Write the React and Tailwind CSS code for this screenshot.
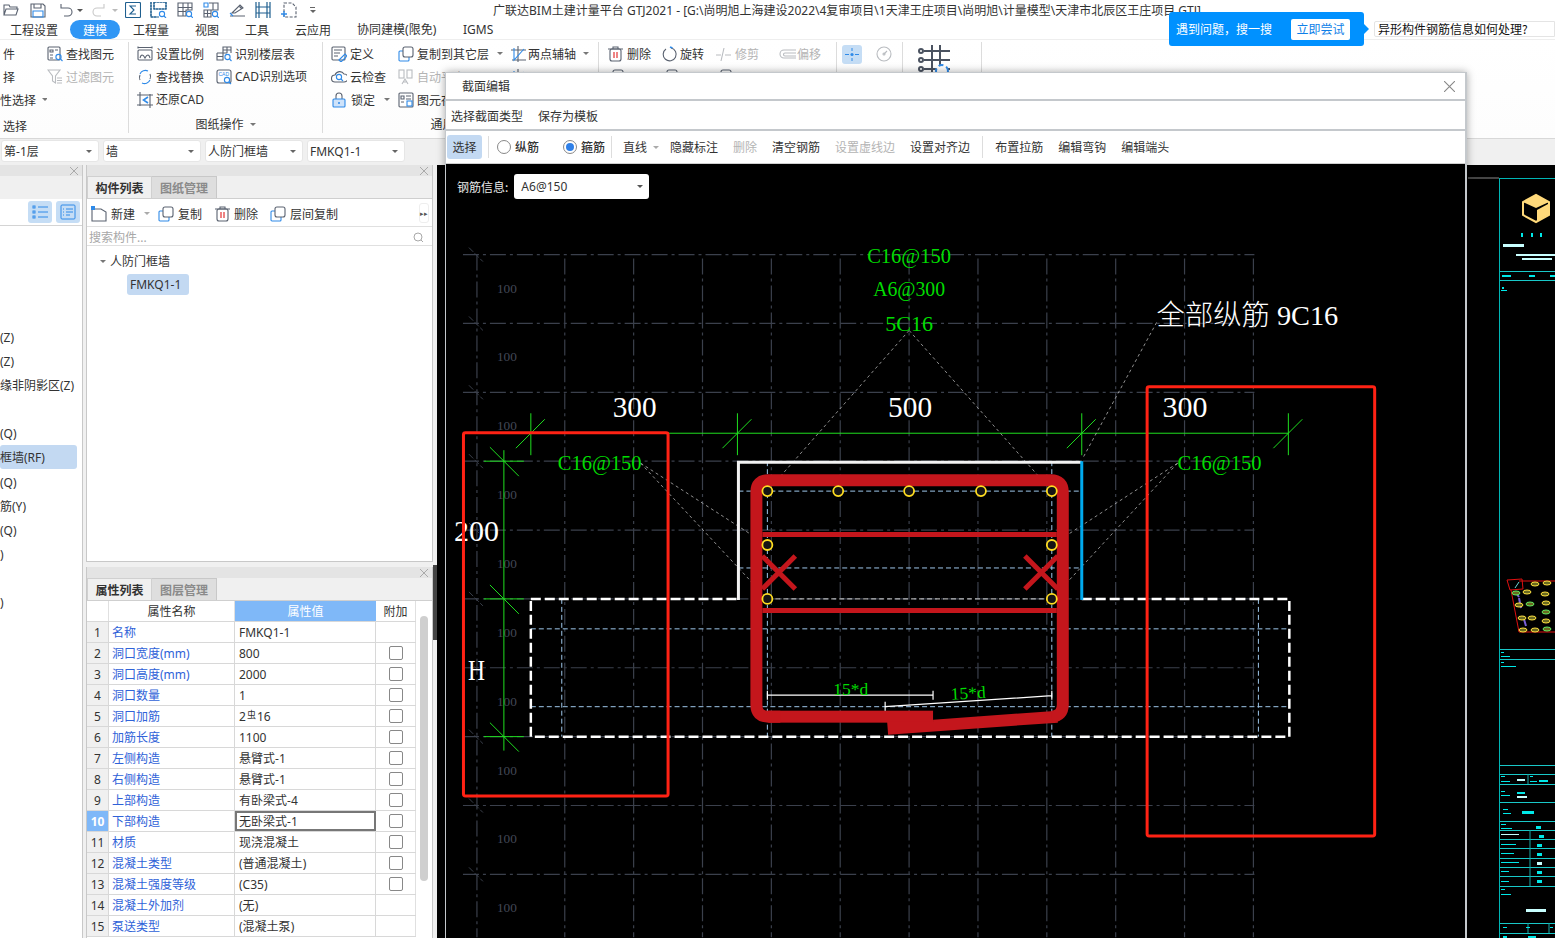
import React from "react";

const B = "#2f8ae8";
const G = "#5a6270";
const L = "#b9bcc0";

const Mix = ({ t }) => (
  <span>
    {String(t).split(/([\x20-\x7e]+)/).map((p, i) =>
      i % 2 ? <span key={i} className="font-['Noto_Sans']">{p}</span> : p
    )}
  </span>
);

const Ic = ({ children, w = 16, h = 16, c = G }) => (
  <svg width={w} height={h} viewBox={`0 0 ${w} ${h}`} fill="none" stroke={c} strokeWidth="1.1" className="shrink-0">
    {children}
  </svg>
);
const Mag = ({ x = 11, y = 11, c = B }) => (
  <g stroke={c}>
    <circle cx={x} cy={y} r="2.6" />
    <path d={`M${x + 2} ${y + 2}l2 2`} />
  </g>
);
const Caret = ({ c = "border-t-[#777]" }) => (
  <span className={`inline-block w-0 h-0 border-x-[3px] border-t-[3px] border-x-transparent ${c}`} />
);

const icons = {
  find: <Ic><rect x="1" y="1" width="12" height="13" rx="1" /><path d="M3 4h3v2H3zM8 4h3M3 9h3M3 12h3" /><Mag x={11.5} y={11} /></Ic>,
  filter: <Ic c={L}><path d="M1 1h12L8.5 7v7L5.5 12V7zM10 9h5M10 11.5h5M10 14h5" /></Ic>,
  scale: <Ic><rect x="1" y="4" width="14" height="10" rx="1" /><path d="M1 1.5h14M1 .5v2M15 .5v2M3 12c1-4 3-4 5 0 2-4 4-4 5 0" /></Ic>,
  floor: <Ic><path d="M1 7h6V1h8v6M1 7v7h6V7M7 7h4M1 10.5h6M11 1v6M7 4h8" /><Mag x={11.5} y={11} /></Ic>,
  replace: <Ic c={B}><path d="M3 5a6 6 0 0 1 8-3M13 11a6 6 0 0 1-8 3" /><path stroke={G} d="M13 5a6 6 0 0 1 0 5M3 11a6 6 0 0 1 0-5" /></Ic>,
  cad: <Ic><rect x="1" y="1" width="14" height="13" rx="2" /><text x="2.5" y="7" fontSize="5" fill={B} stroke="none" fontFamily="Liberation Sans">CAD</text><Mag x={11} y={11} /></Ic>,
  restore: <Ic><path d="M0 3h16M3 0v14M13 2v14M0 13h16" /><path stroke={B} strokeWidth="1.6" d="M11 5L6.5 8l4.5 3" /></Ic>,
  define: <Ic><rect x="1" y="1" width="13" height="13" rx="1" /><path d="M3 4h8M3 7h6M3 10h4" /><path stroke={B} d="M8 14l6-6 2 2-6 6z" /></Ic>,
  cloud: <Ic><path d="M4 13a3.5 3.5 0 0 1 0-7 5 5 0 0 1 9-1 4 4 0 0 1 0 8z" /><Mag x={8} y={8} /></Ic>,
  lock: <Ic><path d="M5 7V4a3 3 0 0 1 6 0v3" /><rect x="2" y="7" width="12" height="8" rx="1" stroke={B} fill="#cfe3fa" /><circle cx="8" cy="11" r="1" fill={B} stroke="none" /></Ic>,
  copy: <Ic><rect x="1" y="5" width="10" height="10" rx="1" stroke={B} /><rect x="5" y="1" width="10" height="10" rx="2" fill="#fff" /></Ic>,
  auto: <Ic c={L}><rect x="1" y="1" width="5" height="8" /><rect x="9" y="1" width="5" height="8" /><path d="M4 15l3-5 3 5M5 13h4" /></Ic>,
  unit: <Ic><rect x="1" y="1" width="14" height="14" rx="1" /><path d="M3 4h3v3H3zM8 4h5M3 10h3M8 7h5" /><rect x="9" y="9" width="5" height="5" stroke={B} /></Ic>,
  axis: <Ic><path d="M1 4h15M2 14h14M8 0v16" /><path stroke={B} d="M4 2v12L14 3" /></Ic>,
  trash: <Ic><rect x="2" y="3" width="11" height="12" rx="2" /><path d="M0 3h15M5 3V1h5v2" /><path stroke="#e02020" d="M6 6v6M9 6v6" /></Ic>,
  rotate: <Ic><path d="M9 2a6.5 6.5 0 1 1-5 1" /><path stroke={B} strokeWidth="1.8" d="M8 1l2.5 1" /></Ic>,
  trim: <Ic c={L}><path d="M0 9h5M9 9h6M8 2L5 15" /></Ic>,
  offset: <Ic w={18} c={L}><path d="M18 4H6a4 4 0 0 0 0 8h12M18 7H7a1 1 0 0 0 0 3h11" /></Ic>,
  axisPt: <Ic w={20} h={19} c="#2f8ae8"><path d="M3 9.500h4M13 9.500h4M10 3v3M10 13v3" strokeWidth="1" /><circle cx="10" cy="9.500" r="1.600" fill={B} stroke="none" /></Ic>,
  gauge: <Ic c={L}><circle cx="8" cy="8" r="7" /><path d="M8 8l3-3" /><circle cx="8" cy="8" r="1" /></Ic>,
};

const Item = ({ icon, label, grey, caret, w, gap = "gap-[3px]" }) => (
  <div className={`flex items-center h-[23px] ${gap} whitespace-nowrap ${grey ? "text-[#b4b4b4]" : ""}`} style={w ? { width: w } : undefined}>
    {icon}
    {label && <Mix t={label} />}
    {caret && <span className="ml-[5px] flex"><Caret /></span>}
  </div>
);

const Group = ({ w, label, children, align = "justify-center", pl = "pl-0", last, lp = "mt-[3px]" }) => (
  <div className={`h-[91px] mt-[2px] flex flex-col shrink-0 ${last ? "" : "border-r border-[#dcdcdc]"}`} style={{ width: w }}>
    <div className={`h-[69px] shrink-0 flex ${pl} overflow-hidden`}>{children}</div>
    {label && (
      <div className={`flex items-center shrink-0 ${align} gap-[6px] h-[20px] ${lp}`}>
        <span>{label.t}</span>
        {label.caret && <Caret />}
      </div>
    )}
  </div>
);

const Ribbon = () => (
  <div className="h-[99px] bg-white flex border-b border-[#d8d8d8] bg-gradient-to-b from-white to-[#fdfdfd]">
    <Group w={129} label={{ t: "选择" }} align="justify-start pl-[3px]" lp="mt-[5px]">
      <div className="w-[47px] overflow-hidden flex flex-col items-end">
        <div className="h-[23px] flex items-center justify-end w-[47px] pr-[32px] overflow-visible">件</div>
        <div className="h-[23px] flex items-center justify-end w-[47px] pr-[32px]">择</div>
        <div className="h-[23px] flex items-center w-[47px] whitespace-nowrap -ml-[15px]">性选择<span className="ml-[6px] flex"><Caret /></span></div>
      </div>
      <div>
        <Item icon={icons.find} label="查找图元" />
        <Item icon={icons.filter} label="过滤图元" grey />
      </div>
    </Group>
    <Group w={194} pl="pl-[8px]" label={{ t: "图纸操作", caret: true }}>
      <div className="w-[79px]">
        <Item icon={icons.scale} label="设置比例" />
        <Item icon={icons.replace} label="查找替换" />
        <Item icon={icons.restore} label="还原CAD" />
      </div>
      <div>
        <Item icon={icons.floor} label="识别楼层表" />
        <Item icon={icons.cad} label="CAD识别选项" />
      </div>
    </Group>
    <Group w={276} pl="pl-[8px]" label={{ t: "通用操作", caret: true }}>
      <div className="w-[67px]">
        <Item icon={icons.define} label="定义" />
        <Item icon={icons.cloud} label="云检查" />
        <Item icon={icons.lock} label="锁定" caret gap="gap-[4px]" />
      </div>
      <div className="w-[112px]">
        <Item icon={icons.copy} label="复制到其它层" caret />
        <Item icon={icons.auto} label="自动平齐" grey />
        <Item icon={icons.unit} label="图元存盘" />
      </div>
      <div>
        <Item icon={icons.axis} label="两点辅轴" caret gap="gap-[2px]" />
        <Item icon={icons.axis} />
      </div>
    </Group>
    <Group w={238} pl="pl-[9px]">
      <div>
        <div className="flex">
          <Item icon={icons.trash} label="删除" w={54} />
          <Item icon={icons.rotate} label="旋转" w={54} gap="gap-[2px]" />
          <Item icon={icons.trim} label="修剪" grey w={62} />
          <Item icon={icons.offset} label="偏移" grey gap="gap-[1px]" />
        </div>
        <div className="flex">
          <Item icon={icons.copy} w={54} />
          <Item icon={icons.copy} w={54} />
          <Item icon={icons.copy} w={62} />
        </div>
      </div>
    </Group>
    <Group w={66} pl="pl-[5px]">
      <div className="flex items-start gap-[14px]">
        <div className="w-[20px] h-[19px] mt-[3px] bg-[#c5ddf5] rounded-[3px] flex">{icons.axisPt}</div>
        <div className="mt-[4px]">{icons.gauge}</div>
      </div>
    </Group>
    <Group w={79} pl="pl-[15px]">
      <svg width="32" height="30" viewBox="0 0 32 30" fill="none" stroke="#4a5260" strokeWidth="2" className="mt-[3px]">
        <path d="M6 6h26M6 15h26M6 24h26M14 0v30M22 0v30" />
        <circle cx="3" cy="6" r="2" fill="#fff" />
        <circle cx="3" cy="15" r="2" fill="#fff" />
        <circle cx="3" cy="24" r="2" fill="#fff" />
        <circle cx="24" cy="26" r="6" fill="#fff" stroke="#2f8ae8" strokeDasharray="5 3" />
      </svg>
    </Group>
  </div>
);

const QuickIcons = () => (
  <div className="w-[493px] shrink-0 flex items-center pl-[3px] h-full">
    <div className="w-[27px]"><Ic><path d="M1 13V3h5l1 2h7v2M1 13l2-6h12l-2 6z" /></Ic></div>
    <div className="w-[27px]"><Ic><path d="M1 2h12l2 2v11H1zM4 2v4h7V2" /><path stroke={B} d="M3 9h10v6H3z" /></Ic></div>
    <div className="w-[20px]"><Ic><path d="M4 6h7a4 4 0 0 1 0 8H7M4 2v4h4" /></Ic></div>
    <div className="w-[15px] flex"><Caret c="border-t-[#555]" /></div>
    <div className="w-[20px]"><Ic c="#c8c8c8"><path d="M12 6H5a4 4 0 0 0 0 8h4M12 2v4H8" /></Ic></div>
    <div className="w-[13px] flex"><Caret c="border-t-[#bbb]" /></div>
    <div className="w-[25px]"><Ic c="#1f5f8f"><rect x=".5" y=".5" width="15" height="15" rx="1" /><path d="M11 4H5l4 4-4 4h6" /></Ic></div>
    <div className="w-[27px]"><Ic w={17} c="#1f5f8f"><path d="M1 0v15h8M4 0h12v7H4z" strokeDasharray="2 1" /><path d="M4 0h12v7H4zM1 0v15h6" /><Mag x={12} y={12} /></Ic></div>
    <div className="w-[26px]"><Ic><path d="M1 1h14v7H9v6H1zM1 5.500h14M6 1v13M11 1v7M1 9.500h8" /><Mag x={12} y={12} /></Ic></div>
    <div className="w-[26px]"><Ic><path d="M6 1h9v7H8M1 8h7v7H1zM10 1v7M1 11.500h7M4.500 8v7" /><path stroke={B} d="M1 1h4v4H1z" /><Mag x={12} y={12} /></Ic></div>
    <div className="w-[26px]"><Ic w={17}><path d="M1 14h15M3 11l8-8 3 3-8 5zM10 4l3 3" /><path stroke={B} d="M1 11l3 3" /></Ic></div>
    <div className="w-[26px]"><Ic c="#1f5f8f"><path d="M1 0v16M15 0v16M1 5h14M1 11h14M4 0v16M12 0v16" strokeWidth="1.200" /></Ic></div>
    <div className="w-[29px]"><Ic><path d="M3 1h8l4 4v10H3z" strokeDasharray="3 1.500" /><path stroke={B} d="M0 12h6M3 9v6" strokeWidth="1.400" /></Ic></div>
    <div className="flex flex-col gap-[2px]"><span className="w-[5px] h-px bg-[#666]" /><Caret c="border-t-[#666]" /></div>
  </div>
);

const Tab = ({ t, active, x }) => (
  <div className={`h-[19px] flex items-center justify-center ${active ? "bg-[#2f96f5] text-white rounded-full" : ""}`} style={{ width: x }}>{t}</div>
);

const Sel = ({ t }) => (
  <div className="w-[98px] h-[22px] bg-white rounded-[3px] flex items-center justify-between pl-[2px] pr-[6px] border border-[#e6e6e6]">
    <Mix t={t} />
    <Caret c="border-t-[#666]" />
  </div>
);

const Close = () => (
  <svg width="8" height="8" viewBox="0 0 8 8" stroke="#aaa" strokeWidth="1"><path d="M0 0l8 8M8 0L0 8" /></svg>
);
const PanelHead = () => (
  <div className="h-[11px] bg-[#e4e4e4] flex items-center justify-end pr-[4px] shrink-0"><Close /></div>
);
const Tabs = ({ a, b }) => (
  <div className="h-[23px] bg-[#f0f0f0] border-b border-[#cfcfcf] flex shrink-0 font-bold">
    <div className="w-[65px] flex items-center justify-center border border-b-0 border-[#d0d0d0]">{a}</div>
    <div className="w-[65px] flex items-center justify-center bg-[#dedede] text-[#8a8a8a] border border-l-0 border-b-0 border-[#c8c8c8]">{b}</div>
  </div>
);

const leftRows = ["", "", "", "", "(Z)", "(Z)", "缘非阴影区(Z)", "", "(Q)", "框墙(RF)", "(Q)", "筋(Y)", "(Q)", ")", "", ")"];

const LeftPanel = () => (
  <div className="w-[83px] shrink-0 border-r border-[#c8c8c8] bg-white flex flex-col">
    <PanelHead />
    <div className="h-[23px] bg-[#f0f0f0] shrink-0" />
    <div className="h-[27px] border-b border-[#d4d4d4] flex items-start justify-end gap-[4px] pr-[2px] shrink-0 bg-white">
      <div className="w-[24px] h-[22px] mt-[2px] bg-[#c5ddf5] rounded-[3px] flex items-center justify-center">
        <svg width="16" height="14" viewBox="0 0 16 14" fill="none" stroke="#2f8ae8" strokeWidth="1"><path d="M6 2h10M6 7h10M6 12h10" /><rect x="1" y="1" width="2" height="2" /><rect x="1" y="6" width="2" height="2" /><rect x="1" y="11" width="2" height="2" /></svg>
      </div>
      <div className="w-[24px] h-[22px] mt-[2px] bg-[#c5ddf5] rounded-[3px] flex items-center justify-center">
        <svg width="16" height="16" viewBox="0 0 16 16" fill="none" stroke="#2f8ae8" strokeWidth="1"><rect x="1" y="1" width="14" height="14" rx="1" /><path d="M3 5h1M6 5h7M3 8h1M6 8h7M3 11h1M6 11h4" /></svg>
      </div>
    </div>
    <div className="pt-[3px] flex flex-col overflow-hidden">
      {leftRows.map((t, i) => (
        <div key={i} className={`h-[24px] flex items-center whitespace-nowrap shrink-0 ${t === "框墙(RF)" ? "bg-[#c3d9f2] rounded-[3px] w-[77px] h-[23px] mb-px" : ""}`}>{t && <Mix t={t} />}</div>
      ))}
    </div>
  </div>
);

const MidToolbar = () => (
  <div className="h-[28px] border-b border-[#e0e0e0] flex items-center pl-[4px] pt-[2px] relative shrink-0">
    <div className="w-[67px] flex items-center">
      <Ic><path d="M1 3h9l5 3v9H1z" /><rect x="0" y="0" width="4" height="4" fill={B} stroke="none" /></Ic>
      <span className="ml-[4px]">新建</span>
      <span className="ml-[9px] flex"><Caret c="border-t-[#aaa]" /></span>
    </div>
    <div className="w-[57px] flex items-center gap-[4px]">{icons.copy}<span>复制</span></div>
    <div className="w-[55px] flex items-center gap-[3px]">{icons.trash}<span>删除</span></div>
    <div className="flex items-center gap-[4px]">{icons.copy}<span>层间复制</span></div>
    <span className="absolute right-[3px] top-[4px] w-[10px] h-[20px] border border-[#eee] rounded-[3px] text-[7px] leading-[18px] text-center text-[#555]">▸▸</span>
  </div>
);

const MidPanel = () => (
  <div className="h-[397px] border-x border-b border-[#c8c8c8] bg-white flex flex-col">
    <PanelHead />
    <Tabs a="构件列表" b="图纸管理" />
    <MidToolbar />
    <div className="h-[19px] border-b border-[#e0e0e0] flex items-center justify-between pl-[2px] pr-[8px] pt-[3px] text-[#a8a8a8] shrink-0">
      <Mix t="搜索构件..." />
      <svg width="11" height="11" viewBox="0 0 11 11" fill="none" stroke="#a8a8a8"><circle cx="5" cy="5" r="4" /><path d="M8 8l2 2" /></svg>
    </div>
    <div className="pl-[13px] pt-[4px]">
      <div className="h-[22px] flex items-center gap-[4px]"><Caret /><span>人防门框墙</span></div>
      <div className="ml-[27px] mt-[2px] w-[62px] h-[21px] bg-[#c3d9f2] rounded-[3px] flex items-center pl-[3px]"><Mix t="FMKQ1-1" /></div>
    </div>
  </div>
);

const rows = [
  ["名称", "FMKQ1-1", false],
  ["洞口宽度(mm)", "800", true],
  ["洞口高度(mm)", "2000", true],
  ["洞口数量", "1", true],
  ["洞口加筋", "rebar", true],
  ["加筋长度", "1100", true],
  ["左侧构造", "悬臂式-1", true],
  ["右侧构造", "悬臂式-1", true],
  ["上部构造", "有卧梁式-4", true],
  ["下部构造", "无卧梁式-1", true],
  ["材质", "现浇混凝土", true],
  ["混凝土类型", "(普通混凝土)", true],
  ["混凝土强度等级", "(C35)", true],
  ["混凝土外加剂", "(无)", false],
  ["泵送类型", "(混凝土泵)", false],
];

const PropPanel = () => (
  <div className="flex-1 border-x border-[#c8c8c8] bg-white flex flex-col min-h-0 overflow-hidden">
    <PanelHead />
    <Tabs a="属性列表" b="图层管理" />
    <div className="flex flex-1 min-h-0">
      <div className="w-[329px] shrink-0 flex flex-col">
        <div className="grid grid-cols-[22px_126px_141px_40px] h-[21px] shrink-0 border-b border-[#d8d8d8]">
          <div className="border-r border-[#e0e0e0]" />
          <div className="border-r border-[#e0e0e0] flex items-center justify-center">属性名称</div>
          <div className="bg-[#7fb8f8] text-white flex items-center justify-center">属性值</div>
          <div className="border-r border-[#e0e0e0] flex items-center justify-center">附加</div>
        </div>
        {rows.map((r, i) => (
          <div key={i} className="grid grid-cols-[22px_126px_141px_40px] h-[21px] shrink-0 border-b border-[#d8d8d8]">
            <div className={`flex items-center justify-center border-r border-[#d8d8d8] ${i === 9 ? "bg-[#7fb8f8] text-white font-bold" : "bg-[#f0f0f0]"}`}><Mix t={String(i + 1)} /></div>
            <div className="border-r border-[#d8d8d8] flex items-center pl-[3px] text-[#2f62d8] whitespace-nowrap"><Mix t={r[0]} /></div>
            <div className={`flex items-center whitespace-nowrap ${i === 9 ? "border-2 border-[#777] pl-[2px]" : "border-r border-[#d8d8d8] pl-[4px]"}`}>
              {r[1] === "rebar" ? (
                <span><span className="font-['Noto_Sans']">2</span><span className="text-[9px] align-[3px] mx-px">虫</span><span className="font-['Noto_Sans']">16</span></span>
              ) : <Mix t={r[1]} />}
            </div>
            <div className="border-r border-[#e0e0e0] flex items-center justify-center">
              {r[2] && <span className="w-[14px] h-[14px] border border-[#888] rounded-[2px]" />}
            </div>
          </div>
        ))}
      </div>
      <div className="flex-1 pt-[15px] flex justify-center">
        <div className="w-[8px] h-[265px] bg-[#cfcfcf] rounded-full" />
      </div>
    </div>
  </div>
);

const hLines = [254, 323, 392, 461, 530, 599, 668, 737, 806, 875];
const vLines = [476, 564, 633, 702, 771, 840, 909, 978, 1047, 1116, 1185, 1254];
const hund = [288, 357, 426, 495, 564, 633, 702, 771, 840, 909];
const rebars = [[767, 491], [838, 491], [909, 491], [981, 491], [1052, 491], [767, 545], [1052, 545], [767, 599], [1052, 599]];
const SERIF = "'Liberation Serif','Noto Sans CJK SC',serif";

const Tick = ({ x, y, v }) => (
  <g stroke="#1fe01f" strokeWidth="1">
    {v ? <path d={`M${x} ${y - 20}v42`} /> : <path d={`M${x - 20} ${y}h40`} />}
    {v ? <path d={`M${x - 15} ${y + 15}l29-29`} /> : <path d={`M${x - 14} ${y - 14}l29 29`} />}
  </g>
);
const Gt = ({ x, y, w, t, s = 22 }) => (
  <text x={x} y={y} fill="#00dd00" fontFamily={SERIF} fontSize={s} textLength={w} lengthAdjust="spacingAndGlyphs">{t}</text>
);
const Wt = ({ x, y, w, t, s = 30 }) => (
  <text x={x} y={y} fill="#fff" fontFamily={SERIF} fontSize={s} textLength={w} lengthAdjust="spacingAndGlyphs">{t}</text>
);

const Section = () => (
  <svg viewBox="445 164 1021 774" className="absolute inset-0 w-full h-full">
    <g stroke="#3b404c" strokeWidth="1.200" strokeDasharray="16 4 3 4" fill="none">
      {hLines.map((y) => <path key={y} d={`M462 ${y}H1255`} />)}
      {vLines.map((x) => <path key={x} d={`M${x} ${x === 476 ? 254 : 258}V938`} />)}
    </g>
    <g stroke="#3b404c" strokeWidth="1" strokeDasharray="6 2">
      {hLines.map((y) => <path key={y} d={`M468 ${y - 7}l14 14`} />)}
    </g>
    {hund.map((y) => (
      <text key={y} x="496" y={y + 4} fill="#434857" fontFamily={SERIF} fontSize="13" textLength="20" lengthAdjust="spacingAndGlyphs">100</text>
    ))}

    <g stroke="#9fc8ec" strokeWidth="1" strokeDasharray="5 3" fill="none">
      <path d="M738 491H1082M738 568H1082M530 629H1290M530 707H1290M561 599V737M1259 599V737M767 461V737M1052 461V737" />
    </g>
    <path d="M767 599H1052" stroke="#d8d8d8" strokeWidth="1" strokeDasharray="5 3" />

    <path d="M530 433H1289M503 450V751" stroke="#1fe01f" strokeWidth="1" fill="none" />
    <Tick x={530} y={433} v /><Tick x={737} y={433} v /><Tick x={1082} y={433} v /><Tick x={1289} y={433} v />
    <Tick x={503} y={461} /><Tick x={503} y={599} /><Tick x={503} y={737} />

    <g stroke="#b4b4b4" strokeWidth="0.800" strokeDasharray="3 3" fill="none">
      <path d="M909 330L767 491M909 330L1052 491M1157 322L1083 458M640 463L767 545M640 463L767 599M1178 463L1052 545M1178 463L1052 599" />
    </g>

    <path d="M530 599H738M1082 599H1290V737H530V599" stroke="#fff" strokeWidth="2.500" strokeDasharray="10 4" fill="none" />
    <path d="M738 600V462H1082" stroke="#f2f2f2" strokeWidth="3" fill="none" />
    <path d="M1082 461V600" stroke="#00aaee" strokeWidth="3" fill="none" />

    <g fill="#c4161c" stroke="none">
      <rect x="768" y="711" width="165" height="12" />
      <polygon points="887,722 888,735 1058,723 1058,711 933,720 933,722" />
    </g>
    <path d="M780 717H768Q756 717 756 705V492Q756 480 768 480H1051Q1063 480 1063 492V705Q1063 716 1052 717" stroke="#c4161c" strokeWidth="12" fill="none" />
    <path d="M762 534.500H1057M762 610.500H1057M762 556L795 589M795 556L762 589M1025 556L1058 589M1058 556L1025 589" stroke="#c4161c" strokeWidth="5" fill="none" />

    {rebars.map(([x, y]) => (
      <circle key={x + "-" + y} cx={x} cy={y} r="5" fill="#151515" stroke="#ffdd22" strokeWidth="1.800" />
    ))}

    <path d="M767 695.500H933M767 691v9M933 691v9M885 707L1052 696M885 702v9M1052 691v9" stroke="#fff" strokeWidth="1.200" fill="none" />

    <Gt x={867} y={262} w={84} t="C16@150" />
    <Gt x={873} y={296} w={72} t="A6@300" />
    <Gt x={885} y={331} w={48} t="5C16" />
    <Gt x={557} y={470} w={84} t="C16@150" />
    <Gt x={1178} y={470} w={84} t="C16@150" />
    <Gt x={833} y={695} w={35} t="15*d" s={17} />
    <g transform="rotate(-3 951 700)"><Gt x={951} y={700} w={35} t="15*d" s={17} /></g>

    <Wt x={612} y={417} w={44} t="300" />
    <Wt x={888} y={417} w={44} t="500" />
    <Wt x={1163} y={417} w={45} t="300" />
    <Wt x={453} y={541} w={45} t="200" />
    <Wt x={467} y={680} w={17} t="H" />
    <text x="1157" y="325" fill="#fff" fontFamily={SERIF} fontSize="28" fontWeight="300" textLength="182" lengthAdjust="spacingAndGlyphs">全部纵筋 9C16</text>

    <rect x="462.500" y="432.500" width="205" height="364" rx="2" fill="none" stroke="#ff2214" strokeWidth="3" />
    <rect x="1147.500" y="386.500" width="228" height="450" rx="2" fill="none" stroke="#ff2214" strokeWidth="3" />
  </svg>
);

const Radio = ({ on, t }) => (
  <div className="flex items-center gap-[4px]">
    <span className="w-[14px] h-[14px] rounded-full border border-[#888] flex items-center justify-center">
      {on && <span className="w-[8px] h-[8px] rounded-full bg-[#2f80e8]" />}
    </span>
    <span className="font-medium">{t}</span>
  </div>
);

const Dialog = () => (
  <div className="absolute left-[445px] top-[72px] w-[1022px] h-[866px] bg-white border-l border-r-2 border-[#c4c8cc] shadow-[0_0_8px_rgba(0,0,0,0.35)] flex flex-col">
    <div className="h-[29px] border-t border-b-2 border-[#c4c8cc] flex items-center justify-between pl-[16px] pr-[10px] shrink-0">
      <span>截面编辑</span>
      <svg width="11" height="11" viewBox="0 0 11 11" stroke="#888" strokeWidth="1.100"><path d="M0 0l11 11M11 0L0 11" /></svg>
    </div>
    <div className="h-[30px] flex items-center gap-[15px] pl-[5px] pt-[2px] border-b-2 border-[#c4c8cc] shrink-0">
      <span>选择截面类型</span>
      <span>保存为模板</span>
    </div>
    <div className="h-[33px] flex items-center pl-[1px] border-b border-[#cfcfcf] shrink-0 whitespace-nowrap">
      <div className="w-[35px] h-[24px] bg-[#c3d9f2] rounded-[3px] flex items-center justify-center">选择</div>
      <span className="w-px h-[22px] bg-[#ddd] ml-[6px]" />
      <div className="ml-[8px]"><Radio t="纵筋" /></div>
      <div className="ml-[24px]"><Radio on t="箍筋" /></div>
      <span className="w-px h-[22px] bg-[#ddd] ml-[6px]" />
      <div className="ml-[11px] flex items-center gap-[6px]"><span>直线</span><Caret c="border-t-[#aaa]" /></div>
      <div className="ml-[11px] flex items-center gap-[15px]">
        <span>隐藏标注</span>
        <span className="text-[#b4b4b4]">删除</span>
        <span>清空钢筋</span>
        <span className="text-[#b4b4b4]">设置虚线边</span>
        <span>设置对齐边</span>
      </div>
      <span className="w-px h-[22px] bg-[#ddd] ml-[12px]" />
      <div className="ml-[12px] flex items-center gap-[15px]">
        <span>布置拉筋</span>
        <span>编辑弯钩</span>
        <span>编辑端头</span>
      </div>
    </div>
    <div className="flex-1 bg-black relative overflow-hidden">
      <Section />
      <div className="absolute left-[11px] top-[10px] flex items-center gap-[6px]">
        <span className="text-[#e8e8e8]">钢筋信息:</span>
        <div className="w-[135px] h-[25px] bg-white rounded-[3px] flex items-center justify-between pl-[7px] pr-[6px]">
          <Mix t="A6@150" />
          <Caret c="border-t-[#555]" />
        </div>
      </div>
    </div>
  </div>
);

const cadH = [271, 280, 649, 659, 765, 774, 784, 802, 821, 830, 839, 848, 858, 867, 876, 886, 923, 933];
const cadBits = [
  [1503, 244, 21, 3], [1516, 254, 39, 2], [1522, 258, 30, 2], [1502, 275, 9, 2], [1529, 275, 6, 2], [1550, 275, 5, 2], [1502, 287, 2, 2], [1501, 290, 6, 1],
  [1501, 652, 3, 1], [1501, 656, 9, 1], [1501, 662, 3, 1], [1501, 666, 15, 1],
  [1501, 776, 4, 1], [1501, 781, 9, 1], [1517, 779, 8, 2], [1530, 776, 3, 1], [1530, 781, 7, 1], [1539, 780, 9, 2],
  [1501, 791, 4, 1], [1501, 795, 9, 1], [1517, 792, 8, 2], [1517, 796, 10, 2],
  [1503, 809, 5, 1], [1503, 813, 8, 1], [1522, 811, 12, 3],
  [1501, 824, 5, 1], [1501, 828, 11, 1], [1536, 826, 5, 3],
  [1501, 834, 18, 1], [1539, 835, 5, 3], [1501, 844, 15, 1], [1537, 844, 5, 3], [1501, 853, 13, 1], [1537, 853, 5, 3],
  [1501, 862, 18, 1], [1537, 862, 5, 3], [1501, 871, 8, 1], [1537, 871, 5, 3], [1501, 881, 8, 1], [1537, 880, 5, 3],
  [1501, 889, 4, 1], [1501, 894, 10, 1], [1526, 909, 20, 3],
  [1503, 927, 4, 1], [1503, 936, 4, 2], [1526, 927, 4, 1], [1550, 927, 3, 1], [1528, 936, 8, 2],
];
const blobs = [[1535, 584], [1547, 583], [1516, 593], [1527, 592], [1545, 594], [1519, 605], [1530, 604], [1546, 603], [1522, 618], [1532, 618], [1546, 612], [1546, 621], [1523, 630], [1535, 630], [1547, 629]];

const CadRight = () => (
  <svg viewBox="1467 165 88 773" className="w-[88px] h-full shrink-0 bg-black">
    <path d="M1468 178H1499" stroke="#8a8a8a" strokeWidth="1" />
    <path d="M1499.500 178.500H1555M1499.500 178V938" stroke="#00b4b4" strokeWidth="1" fill="none" />
    {cadH.map((y) => <path key={y} d={`M1500 ${y}.5H1555`} stroke="#19c8c8" strokeWidth="1" />)}
    <path d="M1530 830V886M1528 923v10M1549 923v10M1528 774v10" stroke="#19a8a8" strokeWidth="1" />
    <g fill="#00e8e8">
      {cadBits.map(([x, y, w, h], i) => <rect key={i} x={x} y={y} width={w} height={h} fill={i < 3 || i > 11 && i % 7 === 0 ? "#c8ffff" : "#00e8e8"} />)}
      <rect x="1521" y="233" width="2" height="4" /><rect x="1531" y="233" width="2" height="4" /><rect x="1540" y="233" width="2" height="4" />
    </g>
    <path d="M1536 195L1549 202V215L1536 222L1523 215V202Z" fill="none" stroke="#ffd97a" strokeWidth="2" />
    <path d="M1536 195L1549 202L1536 208L1523 202Z" fill="#ffd97a" />
    <path d="M1537 210L1548 204V215L1537 221Z" fill="#ffd97a" />
    <path d="M1507 580L1522 579L1523 589L1510 590ZM1519 581H1555M1511 590L1519 632H1555" stroke="#e01010" strokeWidth="1" fill="none" />
    <path d="M1516 593l3 4M1519 598l2 10M1523 616l3 10" stroke="#7a60d8" strokeWidth="2" />
    {blobs.map(([x, y], i) => (
      <ellipse key={i} cx={x} cy={y} rx="4" ry="2" fill="#6a6a20" stroke={i % 4 === 2 ? "#60e860" : "#ffe040"} strokeWidth="1" />
    ))}
    <path d="M1519 582l-4 6" stroke="#70d8d8" strokeWidth="1" />
  </svg>
);

export default function App() {
  return (
    <div className="w-[1555px] h-[938px] relative overflow-hidden bg-white text-[12px] leading-none text-[#333] flex flex-col" style={{ fontFamily: "'Noto Sans CJK SC','Noto Sans',sans-serif" }}>
      <div className="h-[20px] flex items-center shrink-0 whitespace-nowrap">
        <QuickIcons />
        <Mix t="广联达BIM土建计量平台 GTJ2021 - [G:\尚明旭上海建设2022\4复审项目\1天津王庄项目\尚明旭\计量模型\天津市北辰区王庄项目.GTJ]" />
      </div>
      <div className="h-[20px] flex items-center border-b border-[#eee] pl-[10px] shrink-0 whitespace-nowrap">
        <div className="w-[60px]">工程设置</div>
        <Tab t="建模" active x={50} />
        <div className="w-[62px] ml-[13px]">工程量</div>
        <div className="w-[50px]">视图</div>
        <div className="w-[50px]">工具</div>
        <div className="w-[62px]">云应用</div>
        <div className="w-[106px]"><Mix t="协同建模(限免)" /></div>
        <div><Mix t="IGMS" /></div>
      </div>
      <Ribbon />
      <div className="h-[26px] bg-[#f0f0f0] flex items-center gap-[4px] pl-[1px] pb-[2px] shrink-0">
        <Sel t="第-1层" /><Sel t="墙" /><Sel t="人防门框墙" /><Sel t="FMKQ1-1" />
      </div>
      <div className="flex-1 flex min-h-0 bg-[#f0f0f0]">
        <LeftPanel />
        <div className="w-[347px] ml-[3px] shrink-0 flex flex-col gap-[5px]">
          <MidPanel />
          <PropPanel />
        </div>
        <div className="w-[4px] shrink-0 flex flex-col pt-[400px] bg-[#f0f0f0]">
          <div className="h-[75px] bg-[#444]" />
        </div>
        <div className="flex-1 bg-black flex justify-end min-w-0">
          <CadRight />
        </div>
      </div>
      <Dialog />
      <div className="absolute left-[1169px] top-[12px] flex items-center">
        <div className="w-[195px] h-[34px] bg-[#0091ff] rounded-[3px] flex items-center pl-[7px] text-white">
          <span className="w-[115px]">遇到问题，搜一搜</span>
          <span className="w-[59px] h-[21px] bg-white text-[#0f7fe8] rounded-[2px] flex items-center justify-center">立即尝试</span>
        </div>
        <span className="w-0 h-0 border-y-[5px] border-l-[5px] border-y-transparent border-l-[#0091ff]" />
        <div className="ml-[5px] w-[181px] h-[16px] bg-white border border-[#e4e4e4] rounded-l-[2px] flex items-center pl-[3px] text-[#111] whitespace-nowrap overflow-hidden">异形构件钢筋信息如何处理?</div>
      </div>
    </div>
  );
}
